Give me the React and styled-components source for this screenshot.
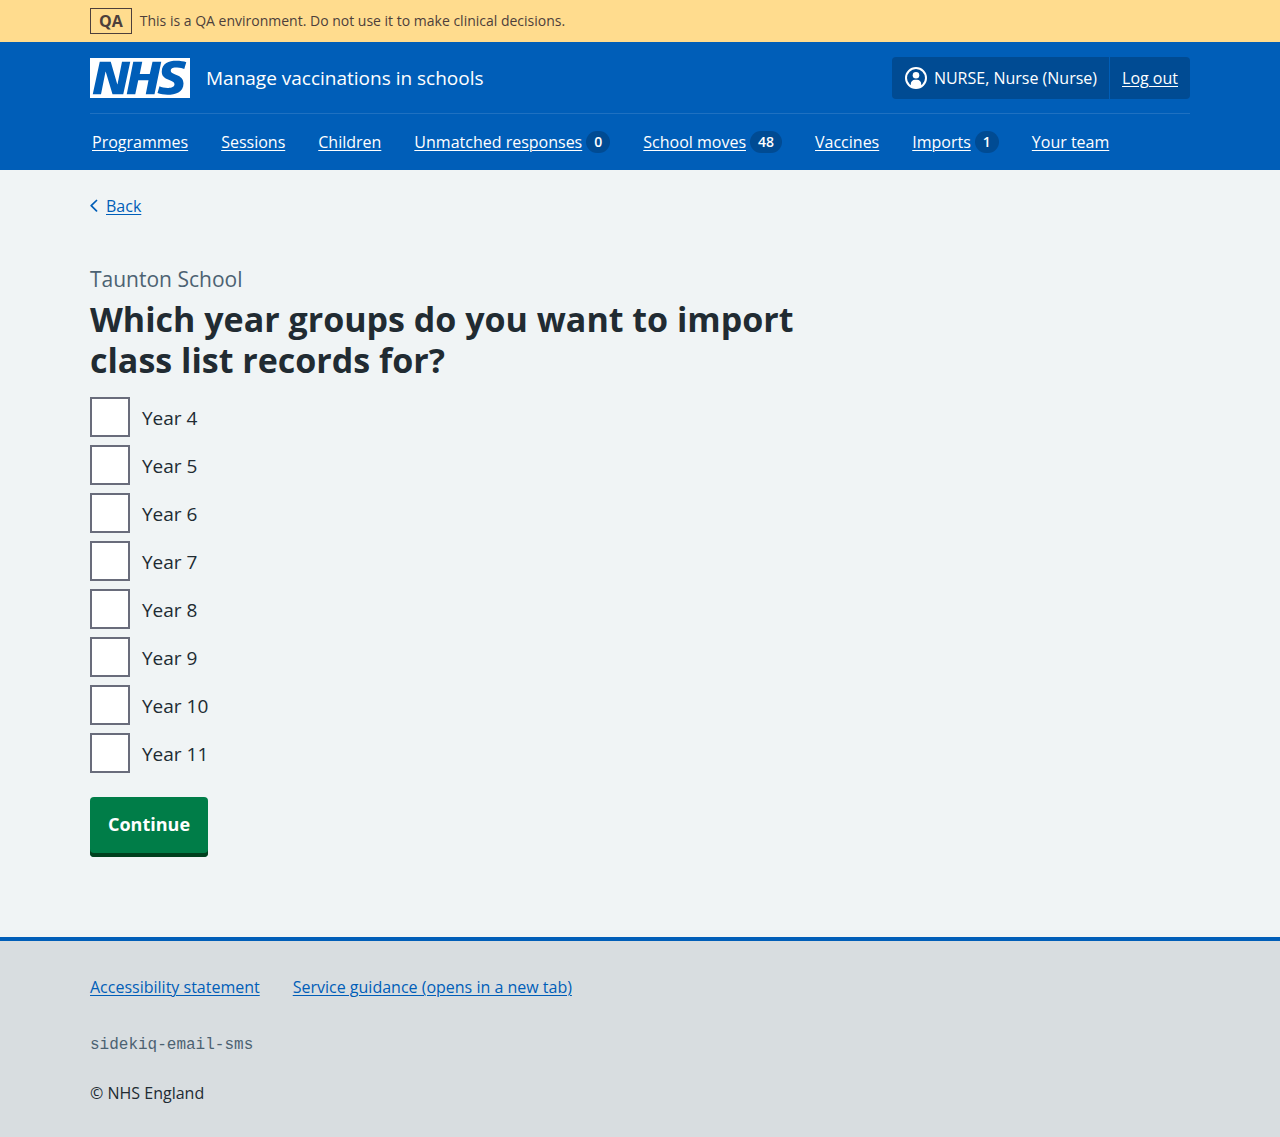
import React from "react";
import styled, { createGlobalStyle } from "styled-components";

const GlobalStyle = createGlobalStyle`
  *, *::before, *::after { box-sizing: border-box; }
  body {
    margin: 0;
    background: #d8dde0;
    color: #212b32;
    font-family: "Open Sans", "Noto Sans", sans-serif;
    font-size: 16px;
    line-height: 24px;
  }
  a { text-underline-offset: 2px; text-decoration-thickness: 1px; }
`;

const Container = styled.div`
  width: min(100% - 64px, 1100px);
  margin: 0 auto;
`;

const EnvironmentBanner = styled.div`
  background: #ffdc8e;
  color: #4d3f3b;
  padding: 8px 0;
  font-size: 14px;
`;

const BannerRow = styled(Container)`
  display: flex;
  align-items: center;
  gap: 8px;
`;

const EnvironmentTag = styled.strong`
  border: 1px solid #4d3f3b;
  padding: 0 8px;
  font-size: 16px;
  font-weight: 700;
  line-height: 24px;
`;

const Header = styled.header`
  background: #005eb8;
  color: #fff;
  a { color: #fff; }
`;

const HeaderRow = styled.div`
  display: flex;
  align-items: center;
  justify-content: space-between;
  flex-wrap: wrap;
  padding: 15px 0 14px;
  border-bottom: 1px solid #1f71c1;
`;

const ServiceLink = styled.a`
  display: flex;
  align-items: center;
  gap: 16px;
  font-size: 19px;
  line-height: 28px;
  text-decoration: none;
`;

const Account = styled.div`
  display: flex;
  border-radius: 4px;
  background: #004b93;
`;

const AccountItem = styled.div`
  display: flex;
  align-items: center;
  gap: 6px;
  padding: 9px 12px;
  & + & { border-left: 1px solid #005eb8; }
`;

const NavList = styled.ul`
  display: flex;
  flex-wrap: wrap;
  gap: 0 33px;
  margin: 0;
  padding: 16px 2px;
  list-style: none;
`;

const NavItem = styled.li`
  display: flex;
  align-items: center;
  gap: 4px;
`;

const Count = styled.span`
  border-radius: 12px;
  background: #004b93;
  padding: 0 8px;
  font-size: 14px;
  font-weight: 600;
  line-height: 22px;
`;

const Main = styled.main`
  background: #f0f4f5;
  padding: 24px 0 80px;
`;

const BackLink = styled.a`
  display: inline-flex;
  align-items: center;
  gap: 8px;
  color: #005eb8;
`;

const Column = styled.form`
  max-width: 734px;
  margin-top: 44px;
`;

const Fieldset = styled.fieldset`
  border: 0;
  margin: 0;
  padding: 0;
`;

const Legend = styled.legend`
  padding: 0;
  margin-bottom: 16px;
`;

const Caption = styled.span`
  display: block;
  margin-bottom: 4px;
  color: #4c6272;
  font-size: 21px;
  line-height: 32px;
`;

const Title = styled.h1`
  margin: 0;
  font-size: 34px;
  font-weight: 700;
  line-height: 41px;
`;

const Options = styled.div`
  display: grid;
  gap: 8px;
`;

const Option = styled.div`
  display: flex;
  align-items: center;
`;

const Checkbox = styled.input`
  appearance: none;
  width: 40px;
  height: 40px;
  margin: 0;
  border: 2px solid #696c7b;
  background: #fff;
  cursor: pointer;
  &:checked { background: #212b32; box-shadow: inset 0 0 0 8px #fff; }
`;

const OptionLabel = styled.label`
  padding: 7px 12px 5px;
  font-size: 19px;
  line-height: 28px;
  cursor: pointer;
`;

const SubmitButton = styled.button`
  display: block;
  margin-top: 24px;
  padding: 13px 18px 19px;
  border: 0;
  border-radius: 4px;
  box-shadow: inset 0 -4px 0 #00401e;
  background: #007d48;
  color: #fff;
  font-family: inherit;
  font-size: 18px;
  font-weight: 700;
  line-height: 28px;
  cursor: pointer;
`;

const Footer = styled.footer`
  border-top: 4px solid #005eb8;
  background: #d8dde0;
  padding: 34px 0 32px;
`;

const FooterLinks = styled.ul`
  display: flex;
  flex-wrap: wrap;
  gap: 8px 33px;
  margin: 0;
  padding: 0;
  list-style: none;
  a { color: #005eb8; }
`;

const Release = styled.p`
  margin: 34px 0 24px;
  color: #4c6272;
  font-family: "Liberation Mono", monospace;
`;

const Copyright = styled.p`
  margin: 0;
`;

const NhsLogo = () => (
  <svg width="100" height="40" viewBox="0 0 40 16" role="img" aria-label="NHS">
    <path fill="#fff" d="M0 0h40v16H0z" />
    <path
      fill="#005eb8"
      d="M3.9 1.5h4.4l2.6 9h.1l1.8-9h3.3l-2.8 13H9l-2.7-9h-.1l-1.8 9H1.1M17.3 1.5h3.6l-1 4.9h4L25 1.5h3.5l-2.7 13h-3.5l1.1-5.6h-4.1l-1.2 5.6h-3.4M37.7 4.4c-.7-.3-1.6-.6-2.9-.6-1.4 0-2.5.2-2.5 1.3 0 1.8 5.1 1.2 5.1 5.1 0 3.6-3.3 4.5-6.4 4.5-1.3 0-2.9-.3-4-.7l.8-2.7c.7.4 2.1.7 3.2.7s2.8-.2 2.8-1.5c0-2.1-5.1-1.3-5.1-5 0-3.4 2.9-4.4 5.8-4.4 1.6 0 3.1.2 4 .6"
    />
  </svg>
);

const UserIcon = () => (
  <svg width="24" height="24" viewBox="0 0 24 24" fill="#fff" aria-hidden="true">
    <circle cx="12" cy="12" r="10" fill="none" stroke="#fff" strokeWidth="2" />
    <circle cx="12" cy="9.2" r="3.3" />
    <path d="M6.800 20.500v-2.600a4.200 4.200 0 0 1 4.200-4.200h2a4.200 4.200 0 0 1 4.200 4.200v2.600A10 10 0 0 1 12 22a10 10 0 0 1-5.200-1.500Z" />
  </svg>
);

const ChevronLeft = () => (
  <svg width="8" height="14" viewBox="0 0 8 14" fill="none" stroke="#005eb8" strokeWidth="1.7" strokeLinecap="round" strokeLinejoin="round" aria-hidden="true">
    <path d="M6.500 1.500 1.200 6.700l5.300 5.200" />
  </svg>
);

const navigation = [
  { text: "Programmes" },
  { text: "Sessions" },
  { text: "Children" },
  { text: "Unmatched responses", count: 0 },
  { text: "School moves", count: 48 },
  { text: "Vaccines" },
  { text: "Imports", count: 1 },
  { text: "Your team" },
];

const years = [4, 5, 6, 7, 8, 9, 10, 11];

export default function App() {
  return (
    <>
      <GlobalStyle />
      <EnvironmentBanner>
        <BannerRow>
          <EnvironmentTag>QA</EnvironmentTag>
          <span>This is a QA environment. Do not use it to make clinical decisions.</span>
        </BannerRow>
      </EnvironmentBanner>
      <Header>
        <Container>
          <HeaderRow>
            <ServiceLink href="#">
              <NhsLogo />
              <span>Manage vaccinations in schools</span>
            </ServiceLink>
            <Account>
              <AccountItem>
                <UserIcon />
                <span>NURSE, Nurse (Nurse)</span>
              </AccountItem>
              <AccountItem>
                <a href="#">Log out</a>
              </AccountItem>
            </Account>
          </HeaderRow>
          <nav aria-label="Menu">
            <NavList>
              {navigation.map(({ text, count }) => (
                <NavItem key={text}>
                  <a href="#">{text}</a>
                  {count !== undefined && <Count>{count}</Count>}
                </NavItem>
              ))}
            </NavList>
          </nav>
        </Container>
      </Header>
      <Main>
        <Container>
          <BackLink href="#">
            <ChevronLeft />
            Back
          </BackLink>
          <Column>
            <Fieldset>
              <Legend>
                <Caption>Taunton School</Caption>
                <Title>Which year groups do you want to import class list records for?</Title>
              </Legend>
              <Options>
                {years.map((year) => (
                  <Option key={year}>
                    <Checkbox type="checkbox" id={`year-${year}`} name="year_groups" value={year} />
                    <OptionLabel htmlFor={`year-${year}`}>Year {year}</OptionLabel>
                  </Option>
                ))}
              </Options>
            </Fieldset>
            <SubmitButton type="button">Continue</SubmitButton>
          </Column>
        </Container>
      </Main>
      <Footer>
        <Container>
          <FooterLinks>
            <li><a href="#">Accessibility statement</a></li>
            <li><a href="#">Service guidance (opens in a new tab)</a></li>
          </FooterLinks>
          <Release>sidekiq-email-sms</Release>
          <Copyright>© NHS England</Copyright>
        </Container>
      </Footer>
    </>
  );
}
